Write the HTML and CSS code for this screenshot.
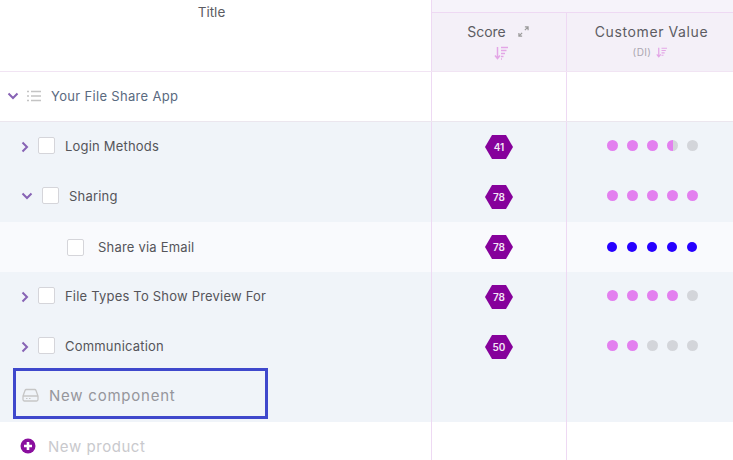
FILE: index.html
```html
<!DOCTYPE html>
<html lang="en">
<head>
<meta charset="utf-8">
<title>Roadmap</title>
<link rel="stylesheet" href="styles.css">
</head>
<body>
<div class="board">
  <div class="row head">
    <div class="title-cell head-title">Title</div>
    <div class="col-group">
      <div class="band"></div>
      <div class="col-heads">
        <div class="cell score-head">
          <div class="head-line">
            <span class="col-name">Score</span>
            <svg class="expand" viewBox="0 0 12 12"><path d="M7.500 1H11v3.500M11 1 7.500 4.500M4.500 11H1V7.500M1 11l3.500-3.500" fill="none" stroke="#9a9a9a" stroke-width="1.300"/></svg>
          </div>
          <svg class="sort sort-lg" viewBox="0 0 14 14"><path d="M3.500 1v11M1 9.500 3.500 12.500 6 9.500" fill="none" stroke="#e3a6e6" stroke-width="1.500"/><path d="M7 1.500h7M7 4.500h5.500M7 7.500h4M7 10.500h2.500M7 13h1" stroke="#e3a6e6" stroke-width="1.300"/></svg>
        </div>
        <div class="cell value-head">
          <span class="col-name wide">Customer Value</span>
          <div class="sub-line">
            <span class="unit">(DI)</span>
            <svg class="sort" viewBox="0 0 14 14"><path d="M3.500 1v11M1 9.500 3.500 12.500 6 9.500" fill="none" stroke="#e3a6e6" stroke-width="1.600"/><path d="M7 1.500h7M7 4.500h5.500M7 7.500h4M7 10.500h2.500" stroke="#e3a6e6" stroke-width="1.400"/></svg>
          </div>
        </div>
      </div>
    </div>
  </div>

  <div class="row product">
    <div class="title-cell indent-product">
      <svg class="chev-down" viewBox="0 0 12 8"><path d="M1.500 1.500 6 6l4.500-4.500" fill="none" stroke="#8763b5" stroke-width="2"/></svg>
      <svg class="list-icon" viewBox="0 0 14 12"><path d="M4 1.500h10M4 6h10M4 10.500h10" stroke="#c4c4c4" stroke-width="1.300"/><path d="M0 1.500h2M0 6h2M0 10.500h2" stroke="#c4c4c4" stroke-width="1.300"/></svg>
      <span class="product-name">Your File Share App</span>
    </div>
    <div class="cell score"></div>
    <div class="cell value"></div>
  </div>

  <div class="row tinted">
    <div class="title-cell indent-a">
      <svg class="chev-right" viewBox="0 0 8 12"><path d="M1.500 1.500 6 6l-4.500 4.500" fill="none" stroke="#8763b5" stroke-width="2"/></svg>
      <span class="box"></span><span class="label">Login Methods</span>
    </div>
    <div class="cell score"><span class="hex">41</span></div>
    <div class="cell value"><div class="dots"><i class="dot on"></i><i class="dot on"></i><i class="dot on"></i><i class="dot half"></i><i class="dot"></i></div></div>
  </div>

  <div class="row tinted">
    <div class="title-cell indent-b">
      <svg class="chev-down" viewBox="0 0 12 8"><path d="M1.500 1.500 6 6l4.500-4.500" fill="none" stroke="#8763b5" stroke-width="2"/></svg>
      <span class="box"></span><span class="label">Sharing</span>
    </div>
    <div class="cell score"><span class="hex">78</span></div>
    <div class="cell value"><div class="dots"><i class="dot on"></i><i class="dot on"></i><i class="dot on"></i><i class="dot on"></i><i class="dot on"></i></div></div>
  </div>

  <div class="row pale">
    <div class="title-cell indent-c">
      <span class="box"></span><span class="label">Share via Email</span>
    </div>
    <div class="cell score"><span class="hex">78</span></div>
    <div class="cell value"><div class="dots dots-blue"><i class="dot blue"></i><i class="dot blue"></i><i class="dot blue"></i><i class="dot blue"></i><i class="dot blue"></i></div></div>
  </div>

  <div class="row tinted">
    <div class="title-cell indent-a">
      <svg class="chev-right" viewBox="0 0 8 12"><path d="M1.500 1.500 6 6l-4.500 4.500" fill="none" stroke="#8763b5" stroke-width="2"/></svg>
      <span class="box"></span><span class="label">File Types To Show Preview For</span>
    </div>
    <div class="cell score"><span class="hex">78</span></div>
    <div class="cell value"><div class="dots"><i class="dot on"></i><i class="dot on"></i><i class="dot on"></i><i class="dot on"></i><i class="dot"></i></div></div>
  </div>

  <div class="row tinted">
    <div class="title-cell indent-a">
      <svg class="chev-right" viewBox="0 0 8 12"><path d="M1.500 1.500 6 6l-4.500 4.500" fill="none" stroke="#8763b5" stroke-width="2"/></svg>
      <span class="box"></span><span class="label">Communication</span>
    </div>
    <div class="cell score"><span class="hex">50</span></div>
    <div class="cell value"><div class="dots"><i class="dot on"></i><i class="dot on"></i><i class="dot"></i><i class="dot"></i><i class="dot"></i></div></div>
  </div>

  <div class="row tinted">
    <div class="title-cell input-cell">
      <div class="input-box">
        <svg class="drive" viewBox="0 0 17 14"><path d="M1 8 3 2.500A1.500 1.500 0 0 1 4.500 1.500h8A1.500 1.500 0 0 1 14 2.500L16 8v3.500a1.500 1.500 0 0 1-1.500 1.500h-12A1.500 1.500 0 0 1 1 11.500zM1 8h15" fill="none" stroke="#c6c6c6" stroke-width="1.300"/><path d="M4 10.500h1.500M7 10.500h1.500" stroke="#c6c6c6" stroke-width="1"/></svg>
        <span class="new-comp">New component</span>
      </div>
    </div>
    <div class="cell score"></div>
    <div class="cell value"></div>
  </div>

  <div class="row last">
    <div class="title-cell indent-new">
      <svg class="plus" viewBox="0 0 16 16"><circle cx="8" cy="8" r="7.500" fill="#8a0f9e"/><path d="M8 4v8M4 8h8" stroke="#fff" stroke-width="2.600"/></svg>
      <span class="new-prod">New product</span>
    </div>
    <div class="cell score"></div>
    <div class="cell value"></div>
  </div>
</div>
</body>
</html>
```

FILE: styles.css
```css
* { box-sizing: border-box; }
html, body { margin: 0; padding: 0; }
body {
  width: 733px;
  height: 460px;
  overflow: hidden;
  background: #fff;
  font-family: Inter, "Liberation Sans", sans-serif;
  color: #55555a;
}
.board { width: 733px; }
.row { display: flex; height: 50px; }
.title-cell { width: 431px; flex: none; display: flex; align-items: center; }
.cell { border-left: 1px solid #eed9f3; }
.score { width: 135px; flex: none; display: flex; align-items: center; justify-content: center; }
.value { flex: 1; display: flex; align-items: center; justify-content: center; }

.head { height: 72px; border-bottom: 1px solid #f1e4f3; }
.head-title { align-items: flex-start; justify-content: center; padding: 4px 8px 0 0; font-size: 13.500px; line-height: 17px; color: #5c5c62; }
.col-group { flex: 1; display: flex; flex-direction: column; background: #f4f0f8; border-left: 1px solid #eed9f3; }
.band { height: 13px; flex: none; border-bottom: 1px solid #eed9f3; background: #f6f3fa; }
.col-heads { flex: 1; display: flex; }
.col-heads .cell { display: flex; flex-direction: column; align-items: center; padding-top: 10px; }
.score-head { width: 134px; flex: none; border-left: 0; }
.value-head { flex: 1; }
.head-line { display: flex; align-items: center; gap: 12px; height: 17px; margin-left: -2px; }
.col-name { font-size: 14px; line-height: 17px; color: #5c5c62; }
.col-name.wide { letter-spacing: 0.6px; margin-left: 3px; }
.expand { width: 11px; height: 11px; margin-left: 0; }
.sort { width: 11px; height: 11px; display: block; }
.sort-lg { width: 14px; height: 14px; margin: 6px 0 0 3px; }
.sub-line { display: flex; align-items: center; gap: 5px; margin-top: 6px; }
.unit { font-size: 10px; line-height: 12px; color: #aaa6b0; letter-spacing: 0.4px; }

.product { border-bottom: 1px solid #ebe6ee; }
.indent-product { padding: 0 0 2px 7px; }
.chev-down { width: 12px; height: 8px; flex: none; }
.list-icon { width: 14px; height: 12px; margin-left: 8px; flex: none; }
.product-name { margin-left: 10px; font-size: 13px; color: #5a6a7f; letter-spacing: 0.32px; }

.tinted { background: #f0f4f9; }
.pale { background: #f9fafd; }
.box { width: 17px; height: 17px; flex: none; background: #fff; border: 1px solid #d5d5da; border-radius: 2px; }
.label { font-size: 13px; letter-spacing: 0.2px; color: #55555a; padding-top: 1px; }
.indent-a { padding: 0 0 3px 21px; }
.indent-a .chev-right { width: 8px; height: 12px; flex: none; margin-top: 3px; }
.indent-a .box { margin-left: 9px; }
.indent-a .label { margin-left: 10px; }
.indent-b { padding: 0 0 3px 21px; }
.indent-b .box { margin-left: 9px; }
.indent-b .label { margin-left: 10px; }
.indent-c { padding: 0 0 0 67px; }
.indent-c .label { margin-left: 14px; padding-top: 0; }

.hex {
  width: 28px; height: 24px;
  display: flex; align-items: center; justify-content: center;
  background: #86019b;
  clip-path: polygon(25% 0, 75% 0, 100% 50%, 75% 100%, 25% 100%, 0 50%);
  color: #f4e6f6;
  font-size: 10px;
  font-weight: 600;
}
.dots { display: flex; gap: 9px; margin: 0 0 4px 4px; }
.dots-blue { gap: 10px; margin: 0 0 0 3px; }
.dot { width: 11px; height: 11px; border-radius: 50%; background: #d3d5da; display: block; }
.dot.on { background: #e37fef; }
.dot.half { background: linear-gradient(90deg, #e37fef 50%, #d3d5da 50%); }
.dot.blue { width: 10px; height: 10px; background: #2600ff; }

.input-cell { align-items: flex-start; padding-left: 13px; }
.input-box {
  width: 255px; height: 51px;
  margin-top: -4px;
  flex: none;
  display: flex; align-items: center;
  padding-left: 6px;
  border: 3px solid #3f48cc;
}
.drive { width: 17px; height: 14px; flex: none; margin-top: 2px; }
.new-comp { margin-left: 10px; font-size: 15px; color: #96969c; letter-spacing: 0.77px; padding-top: 3px; }

.last { height: 38px; }
.indent-new { padding: 10px 0 0 20px; }
.plus { width: 16px; height: 16px; flex: none; }
.new-prod { margin-left: 12px; font-size: 15px; color: #c9c9cd; letter-spacing: 0.55px; }
```
